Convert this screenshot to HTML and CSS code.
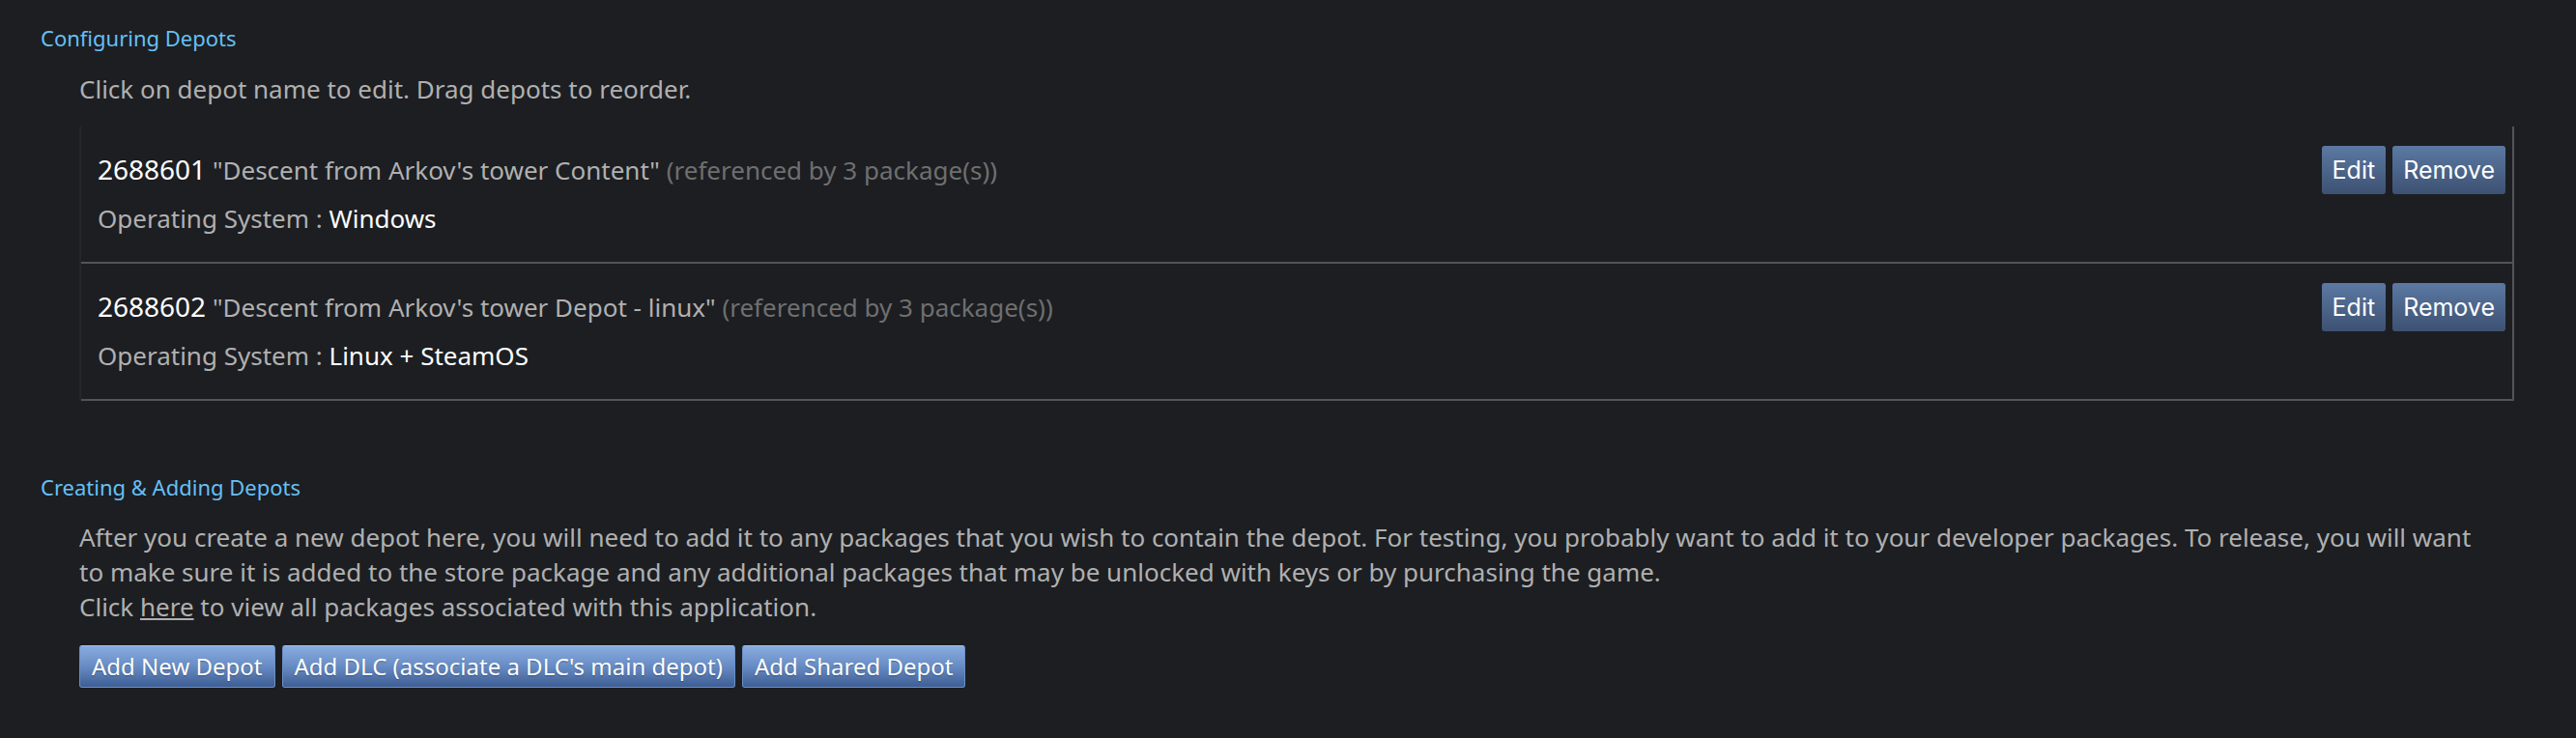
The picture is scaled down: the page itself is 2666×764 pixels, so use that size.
FILE: index.html
```html
<!DOCTYPE html>
<html lang="en">
<head>
<meta charset="utf-8">
<title>Depots</title>
<link rel="stylesheet" href="styles.css">
</head>
<body>
<div class="page">
  <section class="section">
    <div class="section-title">Configuring Depots</div>
    <div class="section-body">
      <p class="hint">Click on depot name to edit. Drag depots to reorder.</p>
      <div class="depot-list">
        <div class="depot-row">
          <div class="depot-info">
            <div class="depot-name"><span class="depot-id">2688601</span> <span class="depot-title">"Descent from Arkov's tower Content"</span> <span class="depot-refs">(referenced by 3 package(s))</span></div>
            <div class="depot-os">Operating System : <span class="os-value">Windows</span></div>
          </div>
          <div class="depot-actions">
            <button class="btn-small">Edit</button>
            <button class="btn-small">Remove</button>
          </div>
        </div>
        <div class="depot-row">
          <div class="depot-info">
            <div class="depot-name"><span class="depot-id">2688602</span> <span class="depot-title">"Descent from Arkov's tower Depot - linux"</span> <span class="depot-refs">(referenced by 3 package(s))</span></div>
            <div class="depot-os">Operating System : <span class="os-value">Linux + SteamOS</span></div>
          </div>
          <div class="depot-actions">
            <button class="btn-small">Edit</button>
            <button class="btn-small">Remove</button>
          </div>
        </div>
      </div>
    </div>
  </section>
  <section class="section section-create">
    <div class="section-title">Creating &amp; Adding Depots</div>
    <div class="section-body">
      <p class="para">After you create a new depot here, you will need to add it to any packages that you wish to contain the depot. For testing, you probably want to add it to your developer packages. To release, you will want to make sure it is added to the store package and any additional packages that may be unlocked with keys or by purchasing the game.<br>Click <a href="#" class="link">here</a> to view all packages associated with this application.</p>
      <div class="actions">
        <button class="btn-blue">Add New Depot</button>
        <button class="btn-blue">Add DLC (associate a DLC's main depot)</button>
        <button class="btn-blue">Add Shared Depot</button>
      </div>
    </div>
  </section>
</div>
</body>
</html>
```
FILE: styles.css
```css
html, body {
  margin: 0;
  padding: 0;
  background: #1c1e22;
}

body {
  font-family: "Noto Sans", "Open Sans", sans-serif;
  font-size: 26px;
  color: #b0b0b0;
}

.page {
  padding: 24px 64px 40px 42px;
}

.section-title {
  font-size: 22px;
  color: #66c0f4;
}

.section-body {
  margin-left: 40px;
}

.hint {
  margin: 20px 0 21px;
}

.depot-list {
  border-left: 2px solid #25272b;
  border-right: 2px solid #545454;
}

.depot-row {
  display: flex;
  justify-content: space-between;
  align-items: flex-start;
  padding: 0 7px 0 17px;
  border-bottom: 2px solid #545454;
  height: 140px;
}

.depot-info {
  padding-top: 25px;
}

.depot-id {
  font-size: 28px;
  color: #ffffff;
}

.depot-title {
  color: #b0b0b0;
}

.depot-refs {
  color: #6f6f6f;
}

.depot-os {
  margin-top: 14px;
}

.os-value {
  color: #ffffff;
}

.depot-actions {
  display: flex;
  gap: 7px;
  margin-top: 20px;
}

.btn-small {
  font-family: Inter, "Noto Sans", sans-serif;
  font-size: 25px;
  color: #ffffff;
  height: 50px;
  padding: 0 11px;
  border: none;
  border-radius: 3px;
  background: linear-gradient(to bottom, #5b79a3 0%, #3d5172 100%);
  cursor: pointer;
}

.section-create {
  margin-top: 74px;
}

.para {
  margin: 19px 40px 0 0;
}

.link {
  color: #b0b0b0;
  text-decoration: underline;
}

.actions {
  display: flex;
  gap: 7px;
  margin-top: 22px;
}

.btn-blue {
  font-family: "Noto Sans", "Open Sans", sans-serif;
  font-size: 24px;
  line-height: 32px;
  color: #ffffff;
  padding: 5px 12px;
  border: 1px solid #6b8fc6;
  border-top-color: #9ec0f0;
  border-radius: 3px;
  background: linear-gradient(to bottom, #89acdf 0%, #6a8fc7 45%, #3e5e94 100%);
  text-shadow: 0 1px 1px rgba(0, 0, 0, 0.3);
  cursor: pointer;
}
```
